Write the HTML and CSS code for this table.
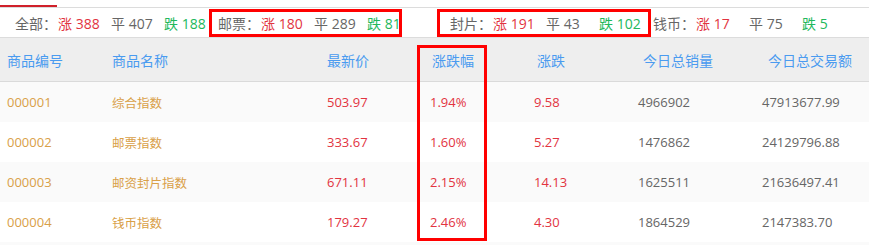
FILE: index.html
```html
<!DOCTYPE html>
<html lang="zh">
<head>
<meta charset="utf-8">
<link rel="stylesheet" href="styles.css">
</head>
<body>
<div class="page">
  <div class="tabs"><div class="tab-active"></div></div>
  <div class="stats">
    <div class="group g1"><span class="label">全部：</span><span class="item up">涨 388</span><span class="item flat">平 407</span><span class="item down">跌 188</span></div>
    <div class="group g2"><span class="label">邮票：</span><span class="item up">涨 180</span><span class="item flat">平 289</span><span class="item down">跌 81</span></div>
    <div class="group g3"><span class="label">封片：</span><span class="item up">涨 191</span><span class="item flat">平 43</span><span class="item down">跌 102</span></div>
    <div class="group g4"><span class="label">钱币：</span><span class="item up">涨 17</span><span class="item flat">平 75</span><span class="item down">跌 5</span></div>
  </div>
  <div class="table">
    <div class="thead">
      <div>商品编号</div><div>商品名称</div><div>最新价</div><div>涨跌幅</div><div>涨跌</div><div>今日总销量</div><div>今日总交易额</div>
    </div>
    <div class="row">
      <div class="code">000001</div><div class="name">综合指数</div><div class="red">503.97</div><div class="red">1.94%</div><div class="red">9.58</div><div class="num">4966902</div><div class="num">47913677.99</div>
    </div>
    <div class="row">
      <div class="code">000002</div><div class="name">邮票指数</div><div class="red">333.67</div><div class="red">1.60%</div><div class="red">5.27</div><div class="num">1476862</div><div class="num">24129796.88</div>
    </div>
    <div class="row">
      <div class="code">000003</div><div class="name">邮资封片指数</div><div class="red">671.11</div><div class="red">2.15%</div><div class="red">14.13</div><div class="num">1625511</div><div class="num">21636497.41</div>
    </div>
    <div class="row">
      <div class="code">000004</div><div class="name">钱币指数</div><div class="red">179.27</div><div class="red">2.46%</div><div class="red">4.30</div><div class="num">1864529</div><div class="num">2147383.70</div>
    </div>
    <div class="row"></div>
  </div>
  <div class="mark mark-stamps"></div>
  <div class="mark mark-covers"></div>
  <div class="mark mark-change"></div>
</div>
</body>
</html>
```

FILE: styles.css
```css
* { box-sizing: border-box; }
html, body { margin: 0; padding: 0; background: #fff; }
body {
  font-family: "Open Sans", "Noto Sans CJK SC", sans-serif;
  color: #666;
  overflow: hidden;
}
.page { position: relative; width: 869px; height: 245px; overflow: hidden; }

.tabs {
  height: 8px;
  border-bottom: 1px solid #dcdcdc;
  display: flex;
  align-items: flex-end;
}
.tab-active { width: 57px; height: 2px; background: #d0202a; }

.stats {
  height: 30px;
  border-bottom: 1px solid #dcdcdc;
  display: flex;
  align-items: center;
  padding-left: 15px;
  font-size: 14px;
  white-space: nowrap;
}
.group { display: flex; align-items: center; }
.g1 { width: 203px; }
.g2 { width: 232px; }
.g3 { width: 203px; }
.label { color: #666; width: 43px; }
.item { width: 53px; }
.up { color: #e2343f; }
.flat { color: #666; }
.down { color: #22b85c; }

.table { font-size: 13px; }
.thead {
  display: grid;
  grid-template-columns: 105px 215px 105px 105px 106px 125px 108px;
  height: 44px;
  align-items: center;
  background: #eeeeee;
  border-bottom: 1px solid #dadada;
  color: #4a9bf0;
  font-size: 14px;
}
.thead > div { padding-left: 7px; }
.row {
  display: grid;
  grid-template-columns: 105px 215px 103px 104px 104px 124px 114px;
  height: 40px;
  align-items: center;
}
.row:nth-child(even) { background: #fafafa; }
.row > div { padding-left: 7px; }
.code, .name { color: #d9a048; }
.name { font-size: 12.5px; }
.red { color: #e2343f; }
.num { color: #666; }

.mark {
  position: absolute;
  border: 3px solid #f00;
}
.mark-stamps { left: 209px; top: 9px; width: 193px; height: 28px; }
.mark-covers { left: 437px; top: 9px; width: 214px; height: 28px; }
.mark-change { left: 417px; top: 45px; width: 70px; height: 196px; }
```
